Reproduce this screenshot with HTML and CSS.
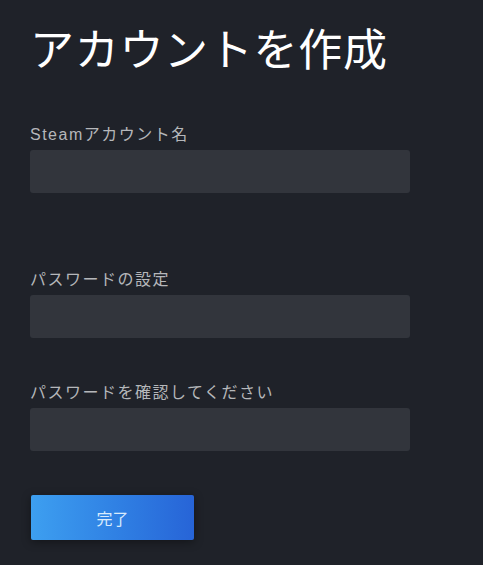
FILE: index.html
```html
<!DOCTYPE html>
<html lang="ja">
<head>
	<meta charset="UTF-8">
	<title>アカウントを作成</title>
	<link rel="stylesheet" href="styles.css">
</head>
<body>
<div class="page">
	<h1 class="title">アカウントを作成</h1>
	<div class="field field-hint">
		<label class="label">Steamアカウント名</label>
		<input class="input" type="text">
	</div>
	<div class="field">
		<label class="label">パスワードの設定</label>
		<input class="input" type="password">
	</div>
	<div class="field">
		<label class="label">パスワードを確認してください</label>
		<input class="input" type="password">
	</div>
	<button class="submit">完了</button>
</div>
</body>
</html>
```
FILE: styles.css
```css
html, body {
	margin: 0;
	padding: 0;
	background-color: #1f2229;
	height: 100%;
}
.page {
	padding: 29px 30px 26px;
	font-family: "Liberation Sans", "Noto Sans CJK JP", sans-serif;
}
.title {
	margin: 0 0 53px;
	font-size: 44px;
	line-height: 44px;
	font-weight: normal;
	letter-spacing: 0.7px;
	color: #ffffff;
}
.field {
	display: flex;
	flex-direction: column;
	gap: 6px;
	margin-bottom: 46px;
}
.field-hint {
	margin-bottom: 78px;
}
.label {
	font-size: 16px;
	line-height: 18px;
	letter-spacing: 1.5px;
	color: #b5b7ba;
}
.input {
	width: 380px;
	height: 43px;
	box-sizing: border-box;
	border: none;
	border-radius: 3px;
	background-color: #32353c;
	color: #fff;
	outline: none;
	padding: 0 10px;
}
.submit {
	display: block;
	width: 163px;
	height: 45px;
	margin: -2px 0 0 1px;
	border: none;
	border-radius: 2px;
	background: linear-gradient(90deg, #3d9ff0 0%, #2f7fe3 55%, #2764d7 100%);
	box-shadow: 0 2px 10px rgba(0, 0, 0, 0.4);
	color: #d9ebfd;
	font-family: "Liberation Sans", "Noto Sans CJK JP", sans-serif;
	font-size: 16px;
	cursor: pointer;
}
```
